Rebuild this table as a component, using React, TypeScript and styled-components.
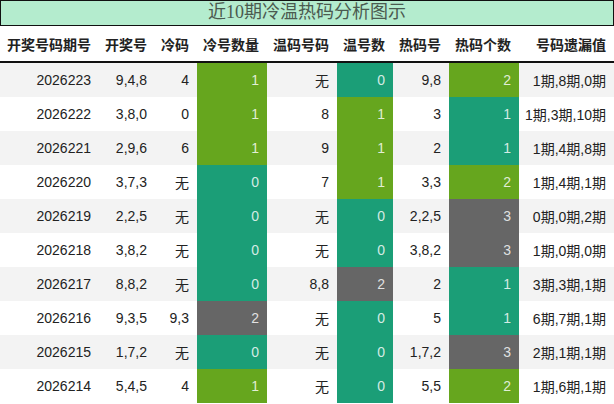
import React from "react";
import styled, { createGlobalStyle } from "styled-components";

const GlobalStyle = createGlobalStyle`
  html, body { margin: 0; padding: 0; background: #ffffff; }
  body { font-family: "Liberation Sans", "Noto Sans CJK SC", sans-serif; }
  * { box-sizing: border-box; }
`;

const COLS = "99px 56px 42px 70px 70px 56px 56px 70px 95px";

const Page = styled.div`
  width: 614px;
  height: 404px;
  overflow: hidden;
  background: #ffffff;
`;

const Title = styled.div`
  height: 26px;
  border: 1px solid #111;
  background: #b4ecce;
  color: #4b5a50;
  font-family: "Liberation Serif", "Noto Sans CJK SC", serif;
  font-size: 18px;
  line-height: 23px;
  text-align: center;
`;

const HeaderRow = styled.div`
  display: grid;
  grid-template-columns: ${COLS};
  height: 37px;
  border-bottom: 2px solid #111;
  background: #ffffff;
`;

const HeadCell = styled.div`
  display: flex;
  align-items: center;
  justify-content: flex-end;
  padding-right: 8px;
  font-family: "Noto Sans CJK SC", sans-serif;
  font-weight: 700;
  font-size: 14px;
  color: #222;
  white-space: nowrap;
`;

const Row = styled.div<{ $alt: boolean }>`
  display: grid;
  grid-template-columns: ${COLS};
  height: 34px;
  background: ${(p) => (p.$alt ? "#f3f3f3" : "#ffffff")};
`;

type Tone = "teal" | "green" | "gray";
const toneColor: Record<Tone, string> = {
  teal: "#1b9e77",
  green: "#66a61e",
  gray: "#666666",
};

const Cell = styled.div<{ $tone?: Tone }>`
  display: flex;
  align-items: center;
  justify-content: flex-end;
  padding-right: 8px;
  font-size: 14px;
  white-space: nowrap;
  color: ${(p) => (p.$tone ? "rgba(255,255,255,0.82)" : "#222")};
  background: ${(p) => (p.$tone ? toneColor[p.$tone] : "transparent")};
`;

const headers = [
  "开奖号码期号",
  "开奖号",
  "冷码",
  "冷号数量",
  "温码号码",
  "温号数",
  "热码号",
  "热码个数",
  "号码遗漏值",
];

type RowData = [string, string, string, number, string, number, string, number, string];

const rows: RowData[] = [
  ["2026223", "9,4,8", "4", 1, "无", 0, "9,8", 2, "1期,8期,0期"],
  ["2026222", "3,8,0", "0", 1, "8", 1, "3", 1, "1期,3期,10期"],
  ["2026221", "2,9,6", "6", 1, "9", 1, "2", 1, "1期,4期,8期"],
  ["2026220", "3,7,3", "无", 0, "7", 1, "3,3", 2, "1期,4期,1期"],
  ["2026219", "2,2,5", "无", 0, "无", 0, "2,2,5", 3, "0期,0期,2期"],
  ["2026218", "3,8,2", "无", 0, "无", 0, "3,8,2", 3, "1期,0期,0期"],
  ["2026217", "8,8,2", "无", 0, "8,8", 2, "2", 1, "3期,3期,1期"],
  ["2026216", "9,3,5", "9,3", 2, "无", 0, "5", 1, "6期,7期,1期"],
  ["2026215", "1,7,2", "无", 0, "无", 0, "1,7,2", 3, "2期,1期,1期"],
  ["2026214", "5,4,5", "4", 1, "无", 0, "5,5", 2, "1期,6期,1期"],
];

const coldTone = (n: number): Tone => (n === 0 ? "teal" : n === 1 ? "green" : "gray");
const hotTone = (n: number): Tone => (n === 1 ? "teal" : n === 2 ? "green" : "gray");

export default function App() {
  return (
    <Page>
      <GlobalStyle />
      <Title>近10期冷温热码分析图示</Title>
      <HeaderRow>
        {headers.map((h) => (
          <HeadCell key={h}>{h}</HeadCell>
        ))}
      </HeaderRow>
      {rows.map((r, i) => (
        <Row key={r[0]} $alt={i % 2 === 0}>
          <Cell>{r[0]}</Cell>
          <Cell>{r[1]}</Cell>
          <Cell>{r[2]}</Cell>
          <Cell $tone={coldTone(r[3])}>{r[3]}</Cell>
          <Cell>{r[4]}</Cell>
          <Cell $tone={coldTone(r[5])}>{r[5]}</Cell>
          <Cell>{r[6]}</Cell>
          <Cell $tone={hotTone(r[7])}>{r[7]}</Cell>
          <Cell>{r[8]}</Cell>
        </Row>
      ))}
    </Page>
  );
}
